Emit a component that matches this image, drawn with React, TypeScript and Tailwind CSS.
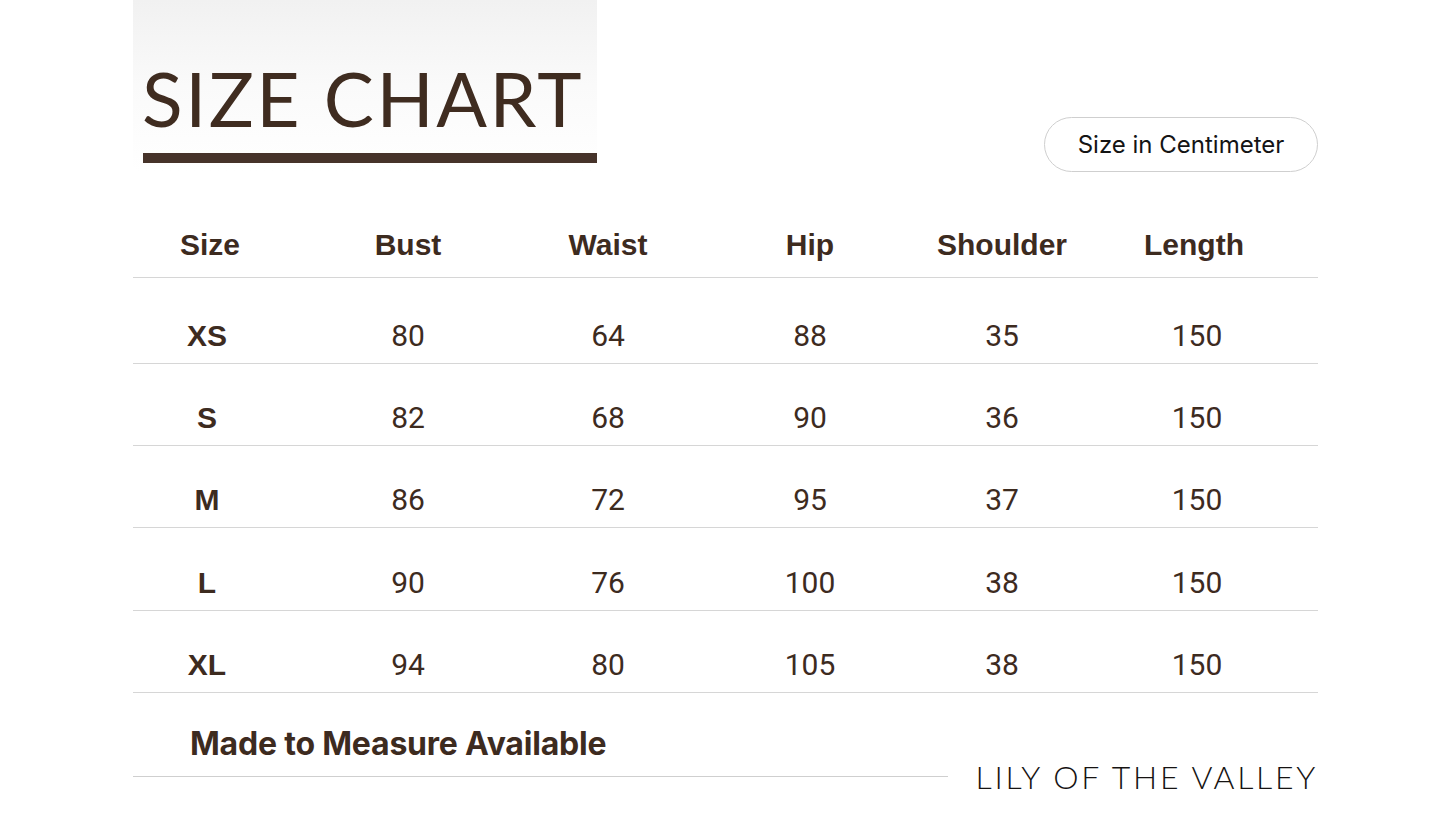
const rows = [
  { size: "XS", bust: 80, waist: 64, hip: 88, shoulder: 35, length: 150, h: "h-[86px]" },
  { size: "S", bust: 82, waist: 68, hip: 90, shoulder: 36, length: 150, h: "h-[82px]" },
  { size: "M", bust: 86, waist: 72, hip: 95, shoulder: 37, length: 150, h: "h-[82px]" },
  { size: "L", bust: 90, waist: 76, hip: 100, shoulder: 38, length: 150, h: "h-[83px]" },
  { size: "XL", bust: 94, waist: 80, hip: 105, shoulder: 38, length: 150, h: "h-[82px]" },
];

const headings = ["Size", "Bust", "Waist", "Hip", "Shoulder", "Length"];

const cols = "grid grid-cols-[154px_242px_158px_246px_138px_246px]";

export default function App() {
  return (
    <div className="min-h-[813px] w-full bg-white text-[#3d2b1f]">
      <div className="ml-[133px] w-[1185px]">
        {/* top: title + unit pill */}
        <div className="flex h-[212px] items-start justify-between">
          <div className="h-[172px] w-[464px] bg-linear-to-b from-[#f1f1f1] via-[#fafafa] to-white pt-[60px]">
            <h1 className="pl-[9px] font-['Lato',sans-serif] text-[75px] leading-[76px] font-normal tracking-[2.5px] text-[#3f2c20]">
              SIZE CHART
            </h1>
            <div className="mt-[17px] ml-[10px] h-[10px] w-[454px] bg-[#46332a]" />
          </div>
          <div className="mt-[117px] flex h-[55px] w-[274px] items-center justify-center rounded-full border border-[#cfcfcf] font-['Inter',sans-serif] text-[24px] text-[#141414]">
            Size in Centimeter
          </div>
        </div>

        {/* table */}
        <div
          className={`${cols} h-[66px] items-center border-b border-[#d6d6d6] font-['Liberation_Sans',Arial,sans-serif] text-[30px] font-bold`}
        >
          {headings.map((h) => (
            <div key={h} className="text-center">
              {h}
            </div>
          ))}
        </div>
        {rows.map((r) => (
          <div
            key={r.size}
            className={`${cols} ${r.h} items-end border-b border-[#d6d6d6] pb-[12px] font-['Roboto',sans-serif] text-[30px] leading-[30px]`}
          >
            <div className="pr-[6px] text-center font-['Liberation_Sans',Arial,sans-serif] font-bold">
              {r.size}
            </div>
            <div className="text-center">{r.bust}</div>
            <div className="text-center">{r.waist}</div>
            <div className="text-center">{r.hip}</div>
            <div className="text-center">{r.shoulder}</div>
            <div className="pl-[6px] text-center">{r.length}</div>
          </div>
        ))}

        {/* footer */}
        <div className="flex items-end justify-between">
          <div className="w-[815px] border-b border-[#cfcfcf] pt-[33px] pb-[14px] pl-[57px] font-['Inter',sans-serif] text-[32px] leading-[36px] font-bold tracking-[-0.2px]">
            Made to Measure Available
          </div>
          <div className="mb-[-18px] font-['Lato',sans-serif] text-[32px] leading-[36px] font-light tracking-[2.7px] text-[#161312]">
            LILY OF THE VALLEY
          </div>
        </div>
      </div>
    </div>
  );
}
